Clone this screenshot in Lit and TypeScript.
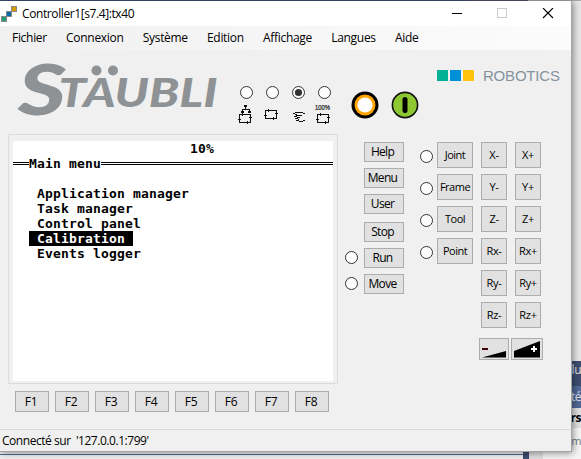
import { LitElement, html, css, svg, nothing } from "lit";
import { customElement, property } from "lit/decorators.js";
import { classMap } from "lit/directives/class-map.js";

@customElement("ui-radio")
class UiRadio extends LitElement {
  @property({ type: Boolean }) checked = false;
  static styles = css`
    :host { display: block; width: 13px; height: 13px; }
    svg { display: block; }
  `;
  render() {
    return html`<svg width="13" height="13" viewBox="0 0 13 13">
      <circle cx="6.5" cy="6.5" r="6" fill="#fff" stroke="#333"></circle>
      ${this.checked ? svg`<circle cx="6.5" cy="6.5" r="3.6" fill="#333"></circle>` : nothing}
    </svg>`;
  }
}

@customElement("lcd-screen")
class LcdScreen extends LitElement {
  static styles = css`
    :host {
      display: block; width: 320px; height: 240px; background: #fff; color: #000;
      font: bold 13px/15px "DejaVu Sans Mono", monospace; letter-spacing: 0.174px;
    }
    .row { height: 15px; white-space: pre; padding-left: 16px; }
    .status { padding-left: 177px; }
    .title { display: flex; padding: 0; }
    .rule { box-sizing: border-box; height: 3px; margin-top: 6px; border: solid #000; border-width: 1px 0; }
    .lead { width: 16px; }
    .rest { flex: 1; }
    .selected { background: #000; color: #fff; }
    .row span { display: inline-block; height: 15px; }
  `;
  render() {
    const items = ["Application manager", "Task manager", "Control panel", "Calibration", "Events logger"];
    return html`
      <div class="row status">10%</div>
      <div class="row title"><div class="rule lead"></div>Main menu<div class="rule rest"></div></div>
      <div class="row"></div>
      ${items.map((t) => html`<div class="row"><span class=${classMap({ selected: t === "Calibration" })}>${" " + t + " "}</span></div>`)}
    `;
  }
}

@customElement("app-root")
class AppRoot extends LitElement {
  static styles = css`
    :host {
      display: block; width: 581px; height: 459px; overflow: hidden; background: #e6e6e6;
      font: 12px/16px "Open Sans", "Noto Sans", sans-serif; color: #000;
    }
    * { box-sizing: border-box; }
    svg { display: block; }
    .top { height: 1px; background: linear-gradient(90deg, #414d73 0 470px, #564f70 470px 528px, #aaa 528px); }
    .desk { display: flex; height: 451px; }
    .window {
      width: 572px; flex: none; background: #f0f0f0; border-right: 1px solid #a4a4a4;
      border-bottom: 1px solid #a4a4a4; display: flex; flex-direction: column;
      z-index: 1; box-shadow: 1px 1px 7px rgba(0, 0, 0, 0.45);
    }
    .titlebar { height: 25px; background: #fff; display: flex; align-items: center; }
    .appicon { margin: 0 5px 0 1px; }
    .titlebar .name { flex: 1; letter-spacing: -0.4px; }
    .controls { margin-right: 17px; }
    .menubar { height: 24px; display: flex; align-items: center; padding-left: 12px; gap: 19.200px; background: linear-gradient(90deg, #f0f0f0, #fcfcfc); }
    .menubar span { letter-spacing: -0.3px; white-space: nowrap; }
    .header { height: 84px; display: flex; }
    .logo { width: 233px; height: 84px; overflow: visible; }
    .mode { width: 26px; padding: 36px 0 0 7px; }
    .mode svg { margin: 4px 0 0 -7px; }
    .lights { display: flex; gap: 12px; padding: 41px 0 0 14.300px; }
    .brand { display: flex; padding: 20px 0 0 17.700px; }
    .sq { width: 11px; height: 11px; margin-right: 2px; }
    .teal { background: #00b096; }
    .blue { background: #0090d8; }
    .yellow { background: #ffc20e; }
    .brand span { margin-left: 7px; font: 15px/12px "Liberation Sans", sans-serif; color: #85929e; letter-spacing: -0.2px; }
    .body { flex: 1; display: flex; align-items: flex-start; }
    .left { width: 339px; padding-left: 8px; }
    .frame { width: 330px; height: 250px; border: 1px solid #dcdcdc; padding: 6px 4px; }
    .fkeys { display: flex; gap: 6px; padding: 7px 0 0 7px; }
    .btn {
      border: 1px solid #adadad; background: #e1e1e1; display: flex; align-items: center;
      justify-content: center; height: 26px; width: 26px; font-size: 11px; letter-spacing: -0.3px; padding: 0;
    }
    .btn.f { width: 34px; height: 21px; padding-right: 2px; font-size: 12px; }
    .btn.cmd { width: 40px; height: 20px; padding-right: 3px; font-size: 12px; letter-spacing: -0.7px; }
    .btn.frm { width: 36px; letter-spacing: -0.5px; }
    .cmds { width: 59px; margin: 8px 0 0 6px; display: flex; flex-direction: column; gap: 6px; }
    .cmd-row { display: flex; justify-content: space-between; align-items: center; }
    .cmd-row.gap { margin-top: 2px; }
    .cmd-row .btn { margin-left: auto; }
    .cmd-row ui-radio { margin-bottom: 1px; }
    .frames { margin: 8px 0 0 16px; display: flex; flex-direction: column; gap: 6px; }
    .frame-row { display: flex; align-items: center; gap: 4px; }
    .frame-row ui-radio { margin-top: 3px; }
    .jog { margin: 8px 0 0 6px; }
    .axes { display: grid; grid-template-columns: 26px 26px; gap: 6px 8px; margin-left: 2px; }
    .speed { display: flex; gap: 2px; margin-top: 10px; }
    .btn.slow { width: 30px; height: 22px; }
    .btn.fast { width: 32px; height: 22px; }
    .statusbar { height: 22px; margin-right: 1px; border-top: 1px solid #d7d7d7; padding: 3px 0 0 2px; white-space: pre; letter-spacing: -0.46px; }
    .side { width: 9px; flex: none; padding-top: 360px; }
    .side div { display: flex; justify-content: flex-end; white-space: nowrap; letter-spacing: -0.5px; }
    .s1 { height: 25px; background: #3d4d70; color: #e0e4ee; padding-top: 1px; }
    .s2 { height: 22px; background: #506896; color: #e0e4ee; padding-top: 3px; }
    .s3 { height: 20px; background: #e0e0e0; font-weight: bold; padding-top: 2px; }
    .s4 { height: 24px; background: #f4f4f4; color: #777; padding-top: 5px; font-size: 11px; }
    .under { height: 7px; display: flex; background: #f4f4f4; }
    .u1 { width: 523px; margin-top: 2px; border-top: 1px solid #50709c; background: #f0f0f0; }
    .u2 { width: 6px; background: #3d4d70; }
    .u3 { width: 14px; background: #e0e0e0; }
  `;

  private robotBox(y: number) {
    return svg`<g fill="none" stroke="#111" stroke-width="1" shape-rendering="crispEdges">
      <rect x="6.500" y=${y + 0.5} width="11" height="8"></rect>
      <path d="M9.500 ${y - 1}v3M16 ${y + 3.5}h3M5 ${y + 5.5}h3M14.500 ${y + 7}v3"></path>
    </g>`;
  }

  private modeIcon(i: number) {
    const art = [
      svg`<g fill="#111" shape-rendering="crispEdges"><path d="M11 2h3v2h-3zM12 4h1v2h-1zM9 6h8v1H9zM9 6h1v3H9zM16 6h1v3h-1zM8 8h3v2H8zM15 8h3v2h-3z"/></g>${this.robotBox(11)}`,
      this.robotBox(7),
      svg`<g fill="none" stroke="#111" shape-rendering="crispEdges"><path d="M8 10.500h2M10 9.500h8M18 10.500h2M10 11.500h2M12 12.500h5M11.500 12v2M9 13.500h2M12.500 14v2M10 15.500h2M13 14.500h2M11 17.500h3M14 18.500h4M18 17.500h2M13.500 16v1"/></g>`,
      svg`<text x="4" y="7.300" textLength="15" lengthAdjust="spacingAndGlyphs" font-family="Liberation Sans" font-size="6.500" letter-spacing="0" fill="#000" stroke="#000" stroke-width=".15">100%</text>${this.robotBox(11)}`,
    ];
    return html`<svg width="26" height="24" viewBox="0 0 26 24">${art[i]}</svg>`;
  }

  render() {
    const menus = ["Fichier", "Connexion", "Système", "Edition", "Affichage", "Langues", "Aide"];
    const cmds = ["Help", "Menu", "User", "Stop", "Run", "Move"];
    const axes = ["X", "Y", "Z", "Rx", "Ry", "Rz"];
    return html`
      <div class="top"></div>
      <div class="desk">
        <div class="window">
          <div class="titlebar">
            <svg class="appicon" width="16" height="17" viewBox="0 0 16 17" shape-rendering="crispEdges">
              <g stroke="#888" stroke-width="1"><rect x=".5" y="11.5" width="5" height="5" fill="#239b6c"/><rect x="5.5" y="6.5" width="5" height="5" fill="#0868a8"/><rect x="10.5" y="1.5" width="5" height="5" fill="#d49b00"/></g>
            </svg>
            <span class="name">Controller1[s7.4]:tx40</span>
            <svg class="controls" width="102" height="12" viewBox="0 0 102 12">
              <path d="M0 5.500h10" stroke="#000"/><rect x="45.5" y=".5" width="9" height="9" fill="none" stroke="#ccc"/><path d="M91 0l10 10M101 0l-10 10" stroke="#000" stroke-width="1.1"/>
            </svg>
          </div>
          <div class="menubar">${menus.map((m) => html`<span>${m}</span>`)}</div>
          <div class="header">
            <svg class="logo" viewBox="0 0 233 84" fill="#8f9294" font-family="Lato" font-weight="900" font-style="italic">
              <clipPath id="caps"><rect x="50" y="28" width="180" height="40"/></clipPath>
              <text x="18" y="65" font-size="70.500" textLength="48" lengthAdjust="spacingAndGlyphs">S</text>
              <text x="58.500" y="57" font-size="39" textLength="159" lengthAdjust="spacingAndGlyphs" clip-path="url(#caps)">TÄUBLI</text>
              <circle cx="96.500" cy="20.500" r="5"/><circle cx="113" cy="20.500" r="5"/>
            </svg>
            ${[0, 1, 2, 3].map((i) => html`<div class="mode"><ui-radio ?checked=${i === 2}></ui-radio>${this.modeIcon(i)}</div>`)}
            <div class="lights">
              <svg width="28" height="28" viewBox="0 0 28 28"><circle cx="14" cy="14" r="13.5"/><circle cx="14" cy="14" r="10.5" fill="#ffa400"/><circle cx="14" cy="14" r="7.6" fill="#fff"/></svg>
              <svg width="28" height="28" viewBox="0 0 28 28"><circle cx="14" cy="14" r="12.6" fill="#8dc833" stroke="#111" stroke-width="1.6"/><rect x="11.5" y="6" width="5" height="16" rx="2.5"/></svg>
            </div>
            <div class="brand"><div class="sq teal"></div><div class="sq blue"></div><div class="sq yellow"></div><span>ROBOTICS</span></div>
          </div>
          <div class="body">
            <div class="left">
              <div class="frame"><lcd-screen></lcd-screen></div>
              <div class="fkeys">${[1, 2, 3, 4, 5, 6, 7, 8].map((n) => html`<div class="btn f">F${n}</div>`)}</div>
            </div>
            <div class="cmds">
              ${cmds.map((c, i) => html`<div class=${classMap({ "cmd-row": true, gap: i === 3 })}>${i > 3 ? html`<ui-radio></ui-radio>` : nothing}<div class="btn cmd">${c}</div></div>`)}
            </div>
            <div class="frames">
              ${["Joint", "Frame", "Tool", "Point"].map((f) => html`<div class="frame-row"><ui-radio></ui-radio><div class="btn frm">${f}</div></div>`)}
            </div>
            <div class="jog">
              <div class="axes">${axes.map((a) => html`<div class="btn">${a}-</div><div class="btn">${a}+</div>`)}</div>
              <div class="speed">
                <div class="btn slow"><svg width="24" height="18" viewBox="0 0 24 18"><path d="M0 17.5L24 11v6.500z"/><rect y="8" width="6" height="2" fill="#400008"/></svg></div>
                <div class="btn fast"><svg width="26" height="18" viewBox="0 0 26 18"><path d="M0 11L26 1v16.500H0z"/><path d="M17 9h6M20 6v6" stroke="#fff" stroke-width="2"/></svg></div>
              </div>
            </div>
          </div>
          <div class="statusbar">Connecté sur  '127.0.0.1:799'</div>
        </div>
        <div class="side"><div class="s1">lu</div><div class="s2">té</div><div class="s3">ers</div><div class="s4">m</div></div>
      </div>
      <div class="under"><div class="u1"></div><div class="u2"></div><div class="u3"></div></div>
    `;
  }
}
